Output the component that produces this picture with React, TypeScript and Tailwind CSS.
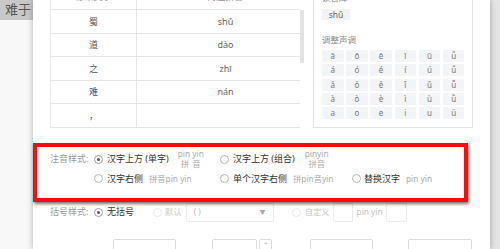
import React from "react";

function Radio({ checked, disabled }: { checked?: boolean; disabled?: boolean }) {
  return (
    <span
      className={`w-[9px] h-[9px] rounded-full border flex items-center justify-center shrink-0 bg-white ${
        disabled ? "border-[#e8e8e8]" : checked ? "border-[#9a9a9a]" : "border-[#b8b8b8]"
      }`}
    >
      {checked && <span className="w-[3px] h-[3px] rounded-full bg-[#555]" />}
    </span>
  );
}

const rows = [
  { h: "h-[24px]", c: "蜀", p: "shǔ" },
  { h: "h-[23px]", c: "道", p: "dào" },
  { h: "h-[24px]", c: "之", p: "zhī" },
  { h: "h-[23px]", c: "难", p: "nán" },
  { h: "h-[24px]", c: "，", p: "" },
];

const tones = [
  ["ā", "ō", "ē", "ī", "ū", "ǖ"],
  ["á", "ó", "é", "í", "ú", "ǘ"],
  ["ǎ", "ǒ", "ě", "ǐ", "ǔ", "ǚ"],
  ["à", "ò", "è", "ì", "ù", "ǜ"],
  ["a", "o", "e", "i", "u", "ü"],
];

export default function App() {
  return (
    <div className="w-[500px] h-[249px] overflow-hidden flex bg-[#f4f4f4] font-['Noto_Sans','Noto_Sans_CJK_SC',sans-serif]">
      <div className="w-[33px] shrink-0 flex flex-col">
        <div className="h-[20px] bg-[#c8c8c8] text-[#555] text-[13px] leading-[18px] pl-[5px] font-['Noto_Sans_CJK_SC',serif]">
          难于
        </div>
        <div className="flex-1 bg-[#f8f8f8]" />
      </div>

      <div className="relative z-10 w-[457px] shrink-0 bg-white shadow-[0_0_6px_rgba(0,0,0,0.3)] flex flex-col pl-[17px]">
        {/* top section */}
        <div className="mt-[-20px] flex items-start">
          <div className="mt-[6px] w-[250px] border-l border-[#e6e6e6] flex flex-col">
            <div className="h-[24px] flex border-b border-[#e6e6e6] text-[9px] text-[#999]">
              <div className="w-[86px] border-r border-[#e6e6e6] flex items-end justify-center pb-[6px]">修改文字</div>
              <div className="flex-1 flex items-end justify-center pl-[14px] pb-[6px]">对应拼音</div>
            </div>
            {rows.map((r, i) => (
              <div key={i} className={`${r.h} flex border-b border-[#e6e6e6] text-[9px] text-[#555]`}>
                <div className="w-[86px] border-r border-[#e6e6e6] flex items-center justify-center">{r.c}</div>
                <div className="flex-1 flex items-center justify-center pl-[14px] text-[#666]">{r.p}</div>
              </div>
            ))}
          </div>
          <div className="mt-[30px] w-[4px] h-[53px] bg-[#e2e2e2] rounded-[1px]" />
          <div className="ml-[9px] w-[160px] h-[148px] border border-[#e3e3e3] pl-[8px] pt-[11px] flex flex-col">
            <div className="text-[8.5px] leading-[12px] text-[#888]">读音库</div>
            <div className="mt-[5px] w-[28px] h-[11px] bg-[#f2f3f5] text-[8.5px] leading-[11px] text-[#666] flex items-center justify-center">
              shǔ
            </div>
            <div className="mt-[14px] text-[8.5px] leading-[12px] text-[#888]">调整声调</div>
            <div className="mt-[4px] flex flex-col gap-[2.25px]">
              {tones.map((row, i) => (
                <div key={i} className="flex gap-[2.7px]">
                  {row.map((t) => (
                    <div
                      key={t}
                      className="w-[21.5px] h-[12px] bg-[#f3f4f6] text-[8px] leading-[12px] text-[#777] flex items-center justify-center"
                    >
                      {t}
                    </div>
                  ))}
                </div>
              ))}
            </div>
          </div>
        </div>

        {/* row 1 */}
        <div className="mt-[21px] h-[22px] flex items-center text-[9px]">
          <div className="w-[44px] text-[#999]">注音样式:</div>
          <div className="w-[126px] flex items-center">
            <Radio checked />
            <span className="ml-[4px] text-[#333]">汉字上方 (单字)</span>
            <div className="ml-[9px] flex flex-col items-center text-[8.3px] leading-[10px] text-[#aaa]">
              <span>pin yin</span>
              <span className="tracking-[3px] pl-[3px]">拼音</span>
            </div>
          </div>
          <div className="w-[132px] flex items-center">
            <Radio />
            <span className="ml-[4px] text-[#333]">汉字上方 (组合)</span>
            <div className="ml-[10px] flex flex-col items-center text-[8.3px] leading-[10px] text-[#aaa]">
              <span>pinyin</span>
              <span>拼音</span>
            </div>
          </div>
        </div>

        {/* row 2 */}
        <div className="mt-[3px] h-[16px] flex items-center text-[9px]">
          <div className="w-[44px]" />
          <div className="w-[126px] flex items-center">
            <Radio />
            <span className="ml-[4px] text-[#333]">汉字右侧</span>
            <span className="ml-[6px] text-[8.3px] text-[#aaa]">拼音pin yin</span>
          </div>
          <div className="w-[132px] flex items-center">
            <Radio />
            <span className="ml-[4px] text-[#333]">单个汉字右侧</span>
            <span className="ml-[6px] text-[8.3px] text-[#aaa]">拼pin音yin</span>
          </div>
          <div className="flex items-center">
            <Radio />
            <span className="ml-[3px] text-[#333]">替换汉字</span>
            <span className="ml-[6px] text-[8.3px] text-[#aaa]">pin yin</span>
          </div>
        </div>

        {/* row 3 */}
        <div className="mt-[17px] h-[19px] flex items-center text-[9px]">
          <div className="w-[44px] text-[#999]">括号样式:</div>
          <Radio checked />
          <span className="ml-[4px] text-[#333]">无括号</span>
          <span className="ml-[19px]">
            <Radio disabled />
          </span>
          <span className="ml-[3px] text-[8.3px] text-[#ccc]">默认</span>
          <div className="ml-[4px] w-[88px] h-[19px] border border-[#ebebeb] rounded-[2px] flex items-center justify-between px-[7px] text-[8.3px] text-[#bbb]">
            <span>( )</span>
            <span className="text-[6px] text-[#aaa]">▼</span>
          </div>
          <span className="ml-[18px]">
            <Radio disabled />
          </span>
          <span className="ml-[4px] text-[8.3px] text-[#c4c4c4]">自定义</span>
          <div className="ml-[3px] w-[20px] h-[19px] border border-[#ebebeb] rounded-[2px]" />
          <span className="ml-[4px] text-[8.3px] text-[#c4c4c4]">pin yin</span>
          <div className="ml-[3px] w-[21px] h-[19px] border border-[#ebebeb] rounded-[2px]" />
        </div>

        {/* row 4 */}
        <div className="mt-[17px] flex items-start">
          <div className="ml-[63px] w-[63px] h-[24px] border border-[#dcdcdc] rounded-[2px]" />
          <div className="ml-[36px] w-[45px] h-[24px] border border-[#dcdcdc] rounded-[2px]" />
          <div className="ml-[2px] w-[13px] h-[24px] border border-[#dcdcdc] rounded-[2px] flex justify-center text-[6px] leading-[10px] text-[#999]">
            ⌃
          </div>
          <div className="ml-[38px] w-[63px] h-[24px] border border-[#dcdcdc] rounded-[2px]" />
          <div className="ml-[35px] w-[64px] h-[24px] border border-[#dcdcdc] rounded-[2px]" />
        </div>

        {/* red annotation box */}
        <div className="absolute left-0 top-[143px] w-[435px] h-[59px] border-[4px] border-[#ff0a0a] shadow-[1px_2px_3px_rgba(0,0,0,0.55)] pointer-events-none" />
      </div>

      <div className="flex-1 bg-[#e4e4e4]" />
    </div>
  );
}
